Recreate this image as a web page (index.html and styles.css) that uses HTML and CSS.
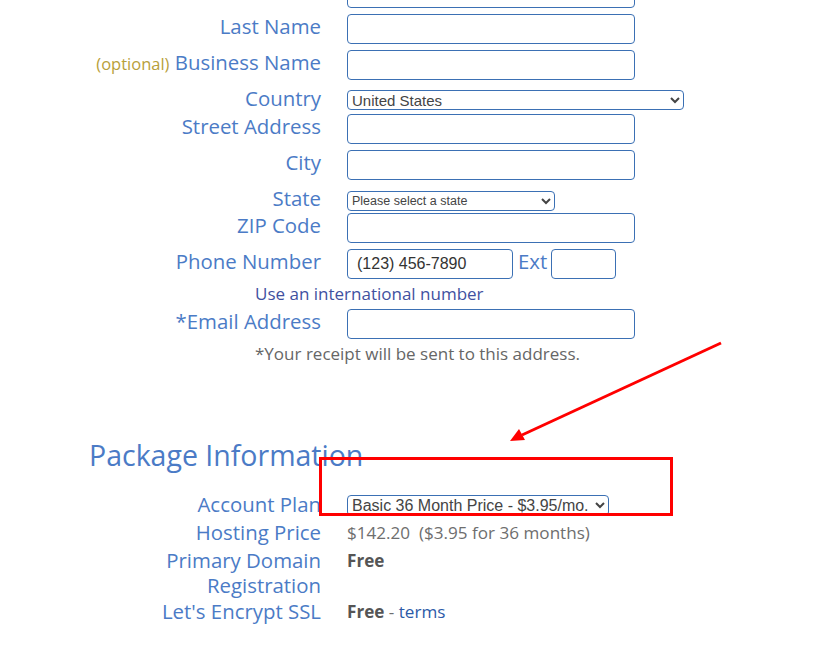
FILE: index.html
```html
<!DOCTYPE html>
<html lang="en">
<head>
    <meta charset="UTF-8">
    <meta name="viewport" content="width=device-width, initial-scale=1.0">
    <title>Account Information</title>
    <link rel="stylesheet" href="styles.css">
</head>
<body>
    <div class="page">
        <form class="signup-form">
            <!-- first name row is scrolled above the top edge -->
            <div class="form-row">
                <span class="field-label"></span>
                <input type="text" class="text-input" aria-label="First Name">
            </div>
            <div class="form-row">
                <label class="field-label">Last Name</label>
                <input type="text" class="text-input">
            </div>
            <div class="form-row">
                <label class="field-label"><span class="optional">(optional)</span> Business Name</label>
                <input type="text" class="text-input">
            </div>
            <div class="form-row select-row">
                <label class="field-label">Country</label>
                <select class="select-input country-select">
                    <option>United States</option>
                </select>
            </div>
            <div class="form-row">
                <label class="field-label">Street Address</label>
                <input type="text" class="text-input">
            </div>
            <div class="form-row">
                <label class="field-label">City</label>
                <input type="text" class="text-input">
            </div>
            <div class="form-row select-row state-row">
                <label class="field-label">State</label>
                <select class="select-input state-select">
                    <option>Please select a state</option>
                </select>
            </div>
            <div class="form-row">
                <label class="field-label">ZIP Code</label>
                <input type="text" class="text-input">
            </div>
            <div class="form-row">
                <label class="field-label">Phone Number</label>
                <input type="text" class="text-input phone-input" value="(123) 456-7890">
                <span class="ext-label">Ext</span>
                <input type="text" class="text-input ext-input">
            </div>
            <p class="hint">Use an international number</p>
            <div class="form-row">
                <label class="field-label">*Email Address</label>
                <input type="text" class="text-input">
            </div>
            <p class="note">*Your receipt will be sent to this address.</p>

            <h2 class="section-title">Package Information</h2>

            <div class="info-row">
                <span class="field-label">Account Plan</span>
                <select class="select-input plan-select">
                    <option>Basic 36 Month Price - $3.95/mo.</option>
                </select>
            </div>
            <div class="info-row">
                <span class="field-label">Hosting Price</span>
                <span class="info-value">$142.20&nbsp;&nbsp;($3.95 for 36 months)</span>
            </div>
            <div class="info-row double-row">
                <span class="field-label">Primary Domain<br>Registration</span>
                <span class="info-value"><b>Free</b></span>
            </div>
            <div class="info-row">
                <span class="field-label">Let's Encrypt SSL</span>
                <span class="info-value"><b>Free</b> - <a href="#" class="terms-link">terms</a></span>
            </div>
        </form>

        <!-- annotation drawn over the screenshot -->
        <svg class="markup" width="814" height="652" viewBox="0 0 814 652">
            <rect x="320.5" y="458.5" width="351" height="56" fill="none" stroke="#f00" stroke-width="3"/>
            <line x1="721" y1="343" x2="522" y2="435" stroke="#f00" stroke-width="3"/>
            <polygon points="510,441 519,429 525,440" fill="#f00"/>
        </svg>
    </div>
</body>
</html>
```

FILE: styles.css
```css
body {
    margin: 0;
    font-family: "Open Sans", Arial, sans-serif;
    background-color: #fff;
}
.page {
    position: relative;
    width: 814px;
    height: 652px;
    overflow: hidden;
}
.signup-form {
    margin-top: -23px;
}
.form-row {
    display: flex;
    align-items: flex-start;
    height: 36px;
}
.select-row {
    height: 28px;
}
.state-row {
    height: 27px;
}
.field-label {
    width: 321px;
    flex-shrink: 0;
    margin-right: 26px;
    text-align: right;
    font-size: 20.4px;
    line-height: 27px;
    color: #4b7bc6;
}
.optional {
    font-size: 16.5px;
    color: #b8a03a;
}
.text-input {
    box-sizing: border-box;
    width: 288px;
    height: 30px;
    margin-top: 1px;
    padding: 2px 9px;
    border: 1px solid #3b70b4;
    border-radius: 4px;
    font-family: Arial, sans-serif;
    font-size: 16px;
    color: #333;
}
.select-input {
    box-sizing: border-box;
    height: 20px;
    margin-top: 5px;
    padding: 0;
    border: 1px solid #3b70b4;
    border-radius: 4px;
    background-color: #fff;
    font-family: Arial, sans-serif;
    color: #444;
}
.state-row .select-input {
    margin-top: 6px;
}
.country-select {
    width: 337px;
    font-size: 15px;
}
.state-select {
    width: 208px;
    font-size: 12.5px;
}
.phone-input {
    width: 166px;
}
.ext-label {
    margin: 0 4px 0 5px;
    font-size: 20.4px;
    line-height: 27px;
    color: #4b7bc6;
}
.ext-input {
    width: 65px;
}
.hint {
    margin: 0;
    padding-left: 255px;
    font-size: 17px;
    line-height: 20px;
    height: 24px;
    color: #41519f;
}
.note {
    margin: 0;
    padding-left: 255px;
    font-size: 17px;
    line-height: 20px;
    color: #666;
}
.section-title {
    margin: 71px 0 17px 89px;
    font-size: 28.5px;
    font-weight: 400;
    line-height: 40px;
    color: #4b7bc6;
}
.info-row {
    display: flex;
    align-items: flex-start;
    height: 28px;
}
.double-row {
    height: 51px;
}
.info-row .field-label {
    line-height: 25px;
}
.info-value {
    font-size: 17.1px;
    line-height: 25px;
    color: #6e6e6e;
}
.info-value b {
    font-weight: 700;
    color: #555;
}
.plan-select {
    width: 262px;
    height: 21px;
    font-size: 16px;
    margin-top: 3px;
}
.terms-link {
    color: #2c5aa8;
    text-decoration: none;
}
.markup {
    position: absolute;
    top: 0;
    left: 0;
    pointer-events: none;
}
```
